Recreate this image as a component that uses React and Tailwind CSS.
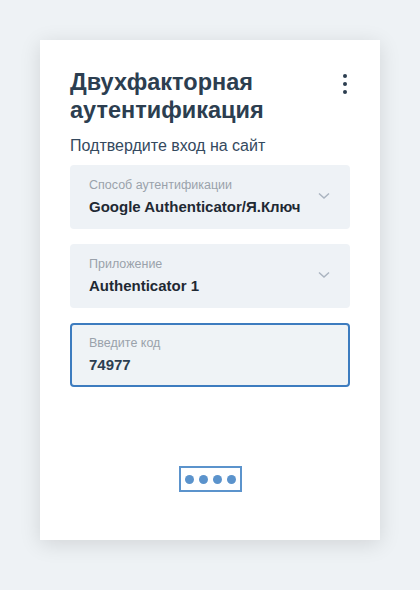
export default function App() {
  const font = { fontFamily: '"Liberation Sans", Arial, sans-serif' };
  return (
    <div className="w-[420px] h-[590px] bg-[#eef2f5] pt-10 px-10" style={font}>
      <div className="w-[340px] h-[500px] bg-white shadow-[0_4px_20px_rgba(0,0,0,0.12)] px-[30px] pt-[28px] flex flex-col">
        <div className="flex justify-between">
          <h1 className="text-[23.5px] leading-[28px] font-bold text-[#2c3e50]">
            Двухфакторная<br />аутентификация
          </h1>
          <div className="flex flex-col items-center gap-[4px] pt-[6px] pr-[3px]">
            <span className="w-[4px] h-[4px] rounded-full bg-[#2c3e50]" />
            <span className="w-[4px] h-[4px] rounded-full bg-[#2c3e50]" />
            <span className="w-[4px] h-[4px] rounded-full bg-[#2c3e50]" />
          </div>
        </div>
        <p className="mt-[12px] text-[16px] leading-[20px] text-[#34495e]">Подтвердите вход на сайт</p>
        <div className="mt-[9px] h-[64px] bg-[#eef2f6] rounded-[4px] flex items-center justify-between pl-[19px] pr-[20px]">
          <div className="flex flex-col">
            <span className="text-[12.5px] leading-[14px] text-[#9aa2ab]">Способ аутентификации</span>
            <span className="mt-[6px] text-[15px] leading-[18px] font-bold text-[#1f2933]">Google Authenticator/Я.Ключ</span>
          </div>
          <svg width="12" height="8" viewBox="0 0 12 8" className="mb-[2px]">
            <path d="M1 1.5 L6 6 L11 1.5" fill="none" stroke="#aab4c0" strokeWidth="1.5" />
          </svg>
        </div>
        <div className="mt-[15px] h-[64px] bg-[#eef2f6] rounded-[4px] flex items-center justify-between pl-[19px] pr-[20px]">
          <div className="flex flex-col">
            <span className="text-[12.5px] leading-[14px] text-[#9aa2ab]">Приложение</span>
            <span className="mt-[6px] text-[15px] leading-[18px] font-bold text-[#1f2933]">Authenticator 1</span>
          </div>
          <svg width="12" height="8" viewBox="0 0 12 8" className="mb-[2px]">
            <path d="M1 1.5 L6 6 L11 1.5" fill="none" stroke="#aab4c0" strokeWidth="1.5" />
          </svg>
        </div>
        <div className="mt-[15px] h-[64px] bg-[#eff3f6] rounded-[4px] border-2 border-[#3d7cbf] flex flex-col justify-center pl-[17px]">
          <span className="text-[12.5px] leading-[14px] text-[#9aa2ab]">Введите код</span>
          <span className="mt-[6px] text-[15px] leading-[18px] font-bold text-[#2c3e50]">74977</span>
        </div>
        <div className="mt-[79px] flex justify-center">
          <div className="w-[63px] h-[26px] border-2 border-[#5b93cc] flex items-center justify-center gap-[5px]">
            <span className="w-[9px] h-[9px] rounded-full bg-[#5b93cc]" />
            <span className="w-[9px] h-[9px] rounded-full bg-[#5b93cc]" />
            <span className="w-[9px] h-[9px] rounded-full bg-[#5b93cc]" />
            <span className="w-[9px] h-[9px] rounded-full bg-[#5b93cc]" />
          </div>
        </div>
      </div>
    </div>
  );
}
